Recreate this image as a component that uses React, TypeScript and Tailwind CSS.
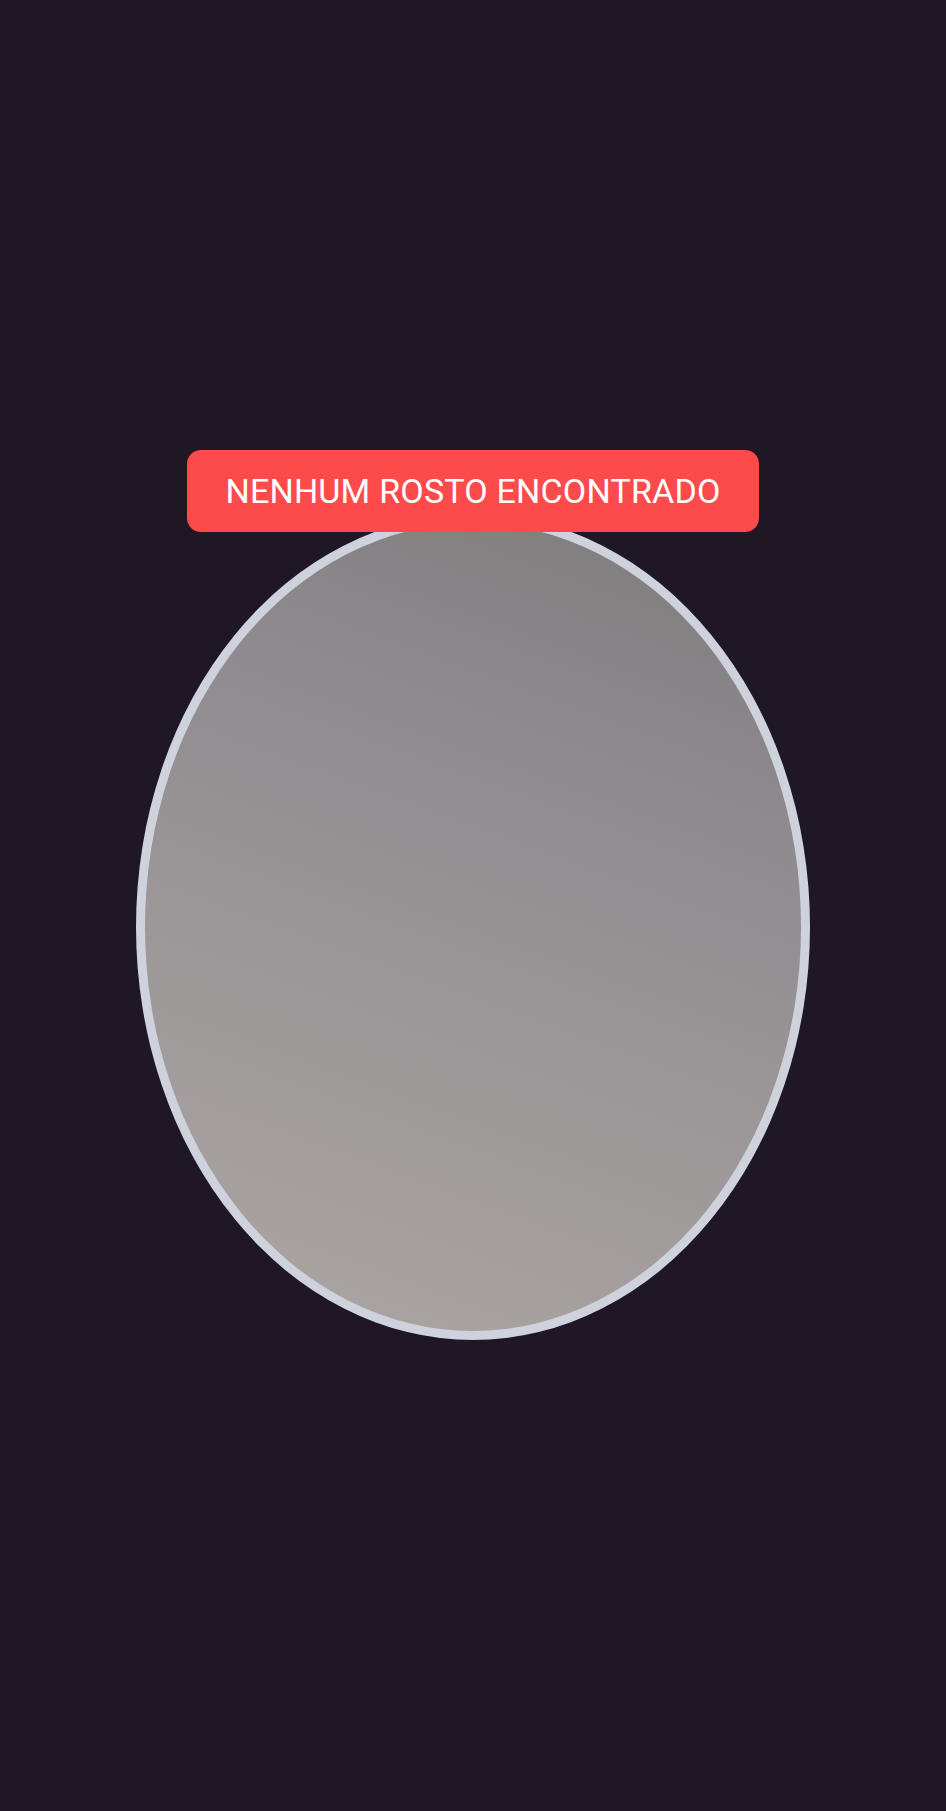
import React from 'react';

const App: React.FC = () => {
  return (
    <div
      className="min-h-[1811px] w-full bg-[#1f1824] flex flex-col items-center pt-[450px]"
      style={{ fontFamily: 'Roboto, "Noto Sans", sans-serif' }}
    >
      <div className="relative z-10 w-[572px] h-[82px] rounded-[14px] bg-[#fd4b4c] flex items-center justify-center">
        <span className="text-white text-[34px] tracking-[0.2px] leading-none">NENHUM ROSTO ENCONTRADO</span>
      </div>
      <div className="-mt-[18px] w-[674px] h-[826px] rounded-[50%] border-[9px] border-[#ced2dc] bg-[linear-gradient(200deg,#7d7a7b_0%,#8e8a8e_30%,#9c9798_60%,#aca6a3_100%)]" />
    </div>
  );
};

export default App;
